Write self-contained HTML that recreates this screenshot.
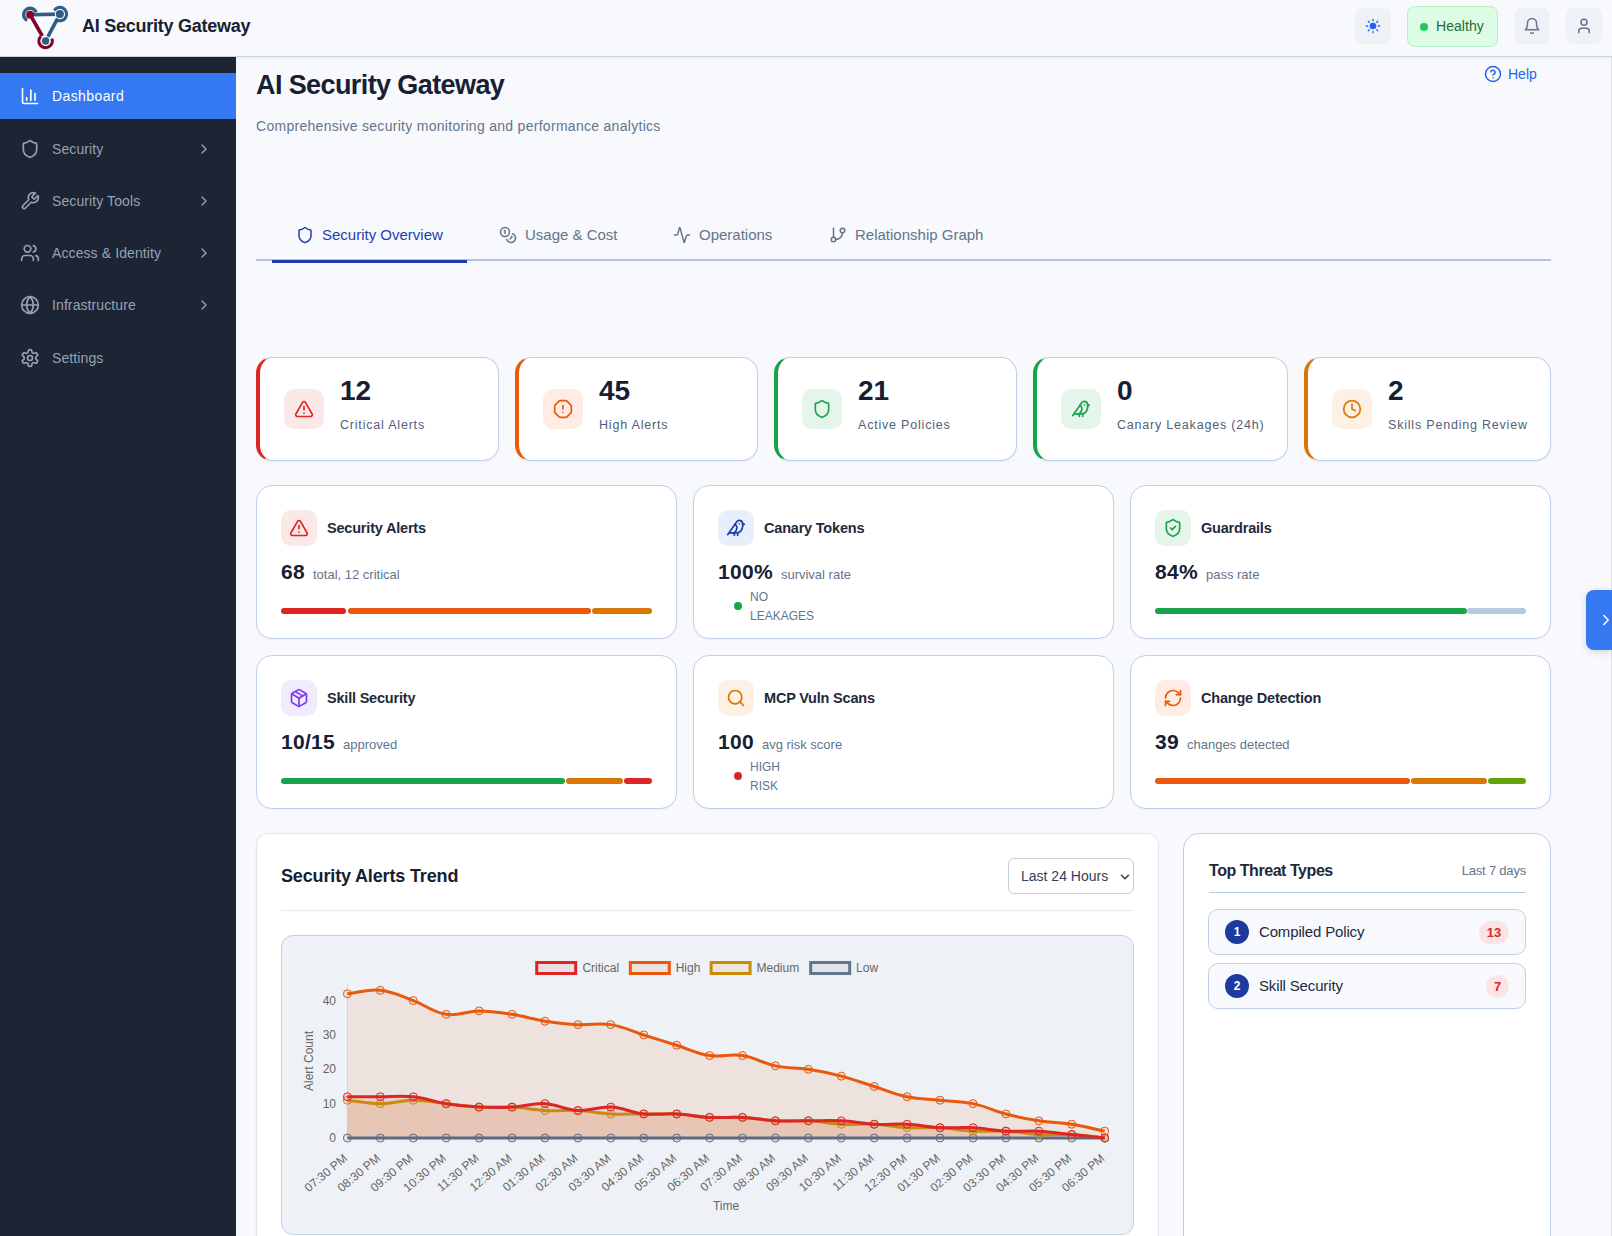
<!DOCTYPE html>
<html><head><meta charset="utf-8">
<style>
*{box-sizing:border-box;margin:0;padding:0}
html,body{width:1612px;height:1236px;overflow:hidden}
body{font-family:"Liberation Sans",sans-serif;background:#f7f9fc;color:#1e293b;position:relative}
.abs{position:absolute}
svg{display:block}
/* header */
#hdr{position:absolute;left:0;top:0;width:1612px;height:57px;background:#f7f9fc;border-bottom:1px solid #c5d3e6;box-shadow:0 1px 3px rgba(15,23,42,.07);z-index:5}
#hdr .title{position:absolute;left:82px;top:15px;font-size:18px;font-weight:bold;color:#172033;letter-spacing:-0.25px;line-height:22px}
.hbtn{position:absolute;top:8px;width:36px;height:36px;border-radius:8px;background:#eef1f6}
.hbtn svg{position:absolute;left:9px;top:9px}
#healthy{position:absolute;left:1407px;top:6px;width:91px;height:41px;border-radius:8px;background:#dcfce4;border:1px solid #b4f0c6}
#healthy .dot{position:absolute;left:12px;top:16px;width:8px;height:8px;border-radius:50%;background:#22c55e}
#healthy .t{position:absolute;left:28px;top:11px;font-size:14px;color:#1f6b3a;line-height:17px;letter-spacing:0.05px}
/* sidebar */
#side{position:absolute;left:0;top:57px;width:236px;height:1179px;background:#1d2433}
.nav{position:absolute;left:0;width:236px;height:46px;color:#94a3b8;font-size:14px;letter-spacing:0.1px}
.nav.active .t{letter-spacing:0.4px}
.nav svg{position:absolute;left:20px;top:13px}
.nav .t{position:absolute;left:52px;top:15px;line-height:17px}
.nav .chev{position:absolute;left:196px;top:15px}
.nav.active{background:#3478f2;color:#fff}
/* main */
#main{position:absolute;left:236px;top:57px;width:1376px;height:1179px}
.h1{position:absolute;left:256px;top:68.5px;font-size:27px;font-weight:bold;color:#172033;letter-spacing:-0.6px;line-height:32px}
.sub{position:absolute;left:256px;top:118px;font-size:14px;color:#64748b;letter-spacing:0.29px;line-height:17px}
#help{position:absolute;left:1484px;top:65px;width:60px;height:20px;color:#2563eb;font-size:14px}
#help .hi{position:absolute;left:0;top:0}
#help .t{position:absolute;left:24px;top:1px;line-height:17px}
#tabs{position:absolute;left:256px;top:259px;width:1295px;height:2px;background:#b3c6e0}
.tab{position:absolute;top:215px;height:48px;font-size:15px;color:#64748b}
.tab svg{position:absolute;left:24px;top:11px}
.tab .t{position:absolute;top:11px;line-height:18px;white-space:nowrap}
.tab.active{color:#1e3fae}
.tab.active:after{content:"";position:absolute;left:0;right:0;bottom:0;height:3px;background:#1e3aa8}
/* stat cards */
.stat{position:absolute;top:357px;height:104px;background:#fff;border:1px solid #c0d0e6;border-left-width:4px;border-radius:16px;box-shadow:0 1px 2px rgba(0,0,0,.05)}
.stat .ib{position:absolute;left:24px;top:31px;width:40px;height:40px;border-radius:10px}
.stat .ib svg{position:absolute;left:10px;top:10px}
.stat .num{position:absolute;left:80px;top:17px;font-size:28px;font-weight:bold;color:#172033;line-height:32px}
.stat .lbl{position:absolute;left:80px;top:60px;font-size:12.5px;color:#526077;letter-spacing:0.8px;line-height:15px;white-space:nowrap}
/* metric cards */
.card{position:absolute;width:421px;height:154px;background:#fff;border:1px solid #c0d0e6;border-radius:16px;box-shadow:0 1px 2px rgba(0,0,0,.04)}
.card .ib{position:absolute;left:24px;top:24px;width:36px;height:36px;border-radius:10px}
.card .ib svg{position:absolute;left:8px;top:8px}
.card .ttl{position:absolute;left:70px;top:33px;font-size:14.5px;font-weight:bold;color:#1e293b;line-height:18px;letter-spacing:-0.2px;white-space:nowrap}
.card .big{position:absolute;left:24px;top:74px;font-size:21px;font-weight:bold;color:#172033;line-height:24px;white-space:nowrap;letter-spacing:0.3px}
.card .small{font-size:13px;font-weight:normal;color:#64748b;margin-left:8px;letter-spacing:0px}
.card .bar{position:absolute;left:24px;top:122px;width:371px;height:6px}
.card .bar i{position:absolute;top:0;display:block;height:6px;border-radius:3px}
.card .stt{position:absolute;left:56px;top:102px;font-size:12px;color:#64748b;line-height:19px;letter-spacing:0px}
.card .sdot{position:absolute;left:40px;top:116px;width:8px;height:8px;border-radius:50%}
.nav .chev svg{position:static}
#ccard{position:absolute;left:256px;top:833px;width:903px;height:500px;background:#fff;border-radius:12px;border:1px solid #e3e6eb;box-shadow:0 1px 3px rgba(15,23,42,.06)}
#sel{position:absolute;left:1008px;top:858px;width:126px;height:36px;background:#fff;border:1px solid #c8cdd5;border-radius:6px;color:#334155;font-size:14px}
#sel .t{position:absolute;left:12px;top:9px;line-height:17px}
#sel .cv{position:absolute;left:109px;top:11px}
#cbox{position:absolute;left:281px;top:935px;width:853px;height:300px;background:#eef2f7;border:1px solid #c0d0e6;border-radius:12px}
#tcard{position:absolute;left:1183px;top:833px;width:368px;height:500px;background:#fff;border:1px solid #c0d0e6;border-radius:16px}
.titem{position:absolute;left:1208px;width:318px;height:46px;background:#f7f9fc;border:1px solid #c0d0e6;border-radius:10px}
.titem .bd{position:absolute;left:16px;top:10px;width:24px;height:24px;border-radius:50%;background:#1e3a9f;color:#fff;font-size:12px;font-weight:bold;text-align:center;line-height:24px}
.titem .t{position:absolute;left:50px;top:13px;font-size:15px;color:#1e293b;line-height:18px;letter-spacing:-0.15px}
.titem .pill{position:absolute;top:11px;height:23px;border-radius:12px;background:#fbe4e6;color:#dc2626;font-size:13px;font-weight:bold;text-align:center;line-height:23px}
#toggle{position:absolute;left:1586px;top:590px;width:26px;height:60px;background:#3478f2;border-radius:8px 0 0 8px;box-shadow:0 2px 8px rgba(0,0,0,.15)}
#toggle svg{position:absolute;left:11px;top:21px}
</style></head>

</head>
<body>
<!-- HEADER -->
<div id="hdr">
  <svg class="abs" style="left:0;top:0" width="80" height="56" viewBox="0 0 80 56">
    <g fill="none" stroke-linecap="butt">
      <path d="M30.1 14.7 L59.9 14.1" stroke="#2f5d84" stroke-width="3.6"/>
      <path d="M59.9 14.1 L45.6 41.0" stroke="#2f5d84" stroke-width="3.6"/>
      <path d="M30.1 14.7 L42.3 36.0" stroke="#870026" stroke-width="3.6"/>
      <path d="M27.10 20.35 A6.40 6.40 0 1 1 36.03 12.30" stroke="#2f5d84" stroke-width="3.3"/>
      <path d="M54.36 10.51 A6.60 6.60 0 1 1 56.80 19.93" stroke="#2f5d84" stroke-width="3.3"/>
      <path d="M51.72 38.53 A6.60 6.60 0 1 1 40.77 36.50" stroke="#870026" stroke-width="3.3"/>
    </g>
    <circle cx="59.9" cy="14.1" r="4.4" fill="none" stroke="#f7f9fc" stroke-width="1.3"/>
    <circle cx="45.6" cy="41.0" r="4.4" fill="none" stroke="#f7f9fc" stroke-width="1.3"/>
    <circle cx="30.1" cy="14.7" r="3.9" fill="#870026"/>
    <circle cx="59.9" cy="14.1" r="4" fill="#2f5d84"/>
    <circle cx="45.6" cy="41.0" r="3.7" fill="#2f5d84"/>
  </svg>
  <div class="title">AI Security Gateway</div>
  <div class="hbtn" style="left:1355px">
    <svg width="16" height="16" style="left:10px;top:10px" viewBox="0 0 24 24" fill="none" stroke="#2563eb" stroke-width="2" stroke-linecap="round"><circle cx="12" cy="12" r="4" fill="#2563eb"/><path d="M12 2v2M12 20v2M4.93 4.93l1.41 1.41M17.66 17.66l1.41 1.41M2 12h2M20 12h2M6.34 17.66l-1.41 1.41M19.07 4.93l-1.41 1.41"/></svg>
  </div>
  <div id="healthy"><span class="dot"></span><span class="t">Healthy</span></div>
  <div class="hbtn" style="left:1514px">
    <svg width="18" height="18" viewBox="0 0 24 24" fill="none" stroke="#64748b" stroke-width="2" stroke-linecap="round" stroke-linejoin="round"><path d="M6 8a6 6 0 0 1 12 0c0 7 3 9 3 9H3s3-2 3-9"/><path d="M10.3 21a1.94 1.94 0 0 0 3.4 0"/></svg>
  </div>
  <div class="hbtn" style="left:1566px">
    <svg width="18" height="18" viewBox="0 0 24 24" fill="none" stroke="#64748b" stroke-width="2" stroke-linecap="round" stroke-linejoin="round"><path d="M19 21v-2a4 4 0 0 0-4-4H9a4 4 0 0 0-4 4v2"/><circle cx="12" cy="7" r="4"/></svg>
  </div>
</div>



<div id="side">
<div class="nav active" style="top:16px"><svg width="20" height="20" viewBox="0 0 24 24" fill="none" stroke="#fff" stroke-width="2" stroke-linecap="round" stroke-linejoin="round"><path d="M3 3v16a2 2 0 0 0 2 2h16"/><path d="M18 17V9"/><path d="M13 17V5"/><path d="M8 17v-3"/></svg><span class="t">Dashboard</span></div>
<div class="nav" style="top:69px"><svg width="20" height="20" viewBox="0 0 24 24" fill="none" stroke="#94a3b8" stroke-width="2" stroke-linecap="round" stroke-linejoin="round"><path d="M20 13c0 5-3.5 7.5-7.66 8.95a1 1 0 0 1-.67-.01C7.5 20.5 4 18 4 13V6a1 1 0 0 1 1-1c2 0 4.5-1.2 6.24-2.72a1.17 1.17 0 0 1 1.52 0C14.51 3.81 17 5 19 5a1 1 0 0 1 1 1z"/></svg><span class="t">Security</span><span class="chev"><svg width="16" height="16" viewBox="0 0 24 24" fill="none" stroke="#94a3b8" stroke-width="2" stroke-linecap="round" stroke-linejoin="round"><path d="m9 18 6-6-6-6"/></svg></span></div>
<div class="nav" style="top:121px"><svg width="20" height="20" viewBox="0 0 24 24" fill="none" stroke="#94a3b8" stroke-width="2" stroke-linecap="round" stroke-linejoin="round"><path d="M14.7 6.3a1 1 0 0 0 0 1.4l1.6 1.6a1 1 0 0 0 1.4 0l3.77-3.77a6 6 0 0 1-7.94 7.94l-6.91 6.910a2.12 2.12 0 0 1-3-3l6.91-6.91a6 6 0 0 1 7.94-7.94l-3.76 3.76z"/></svg><span class="t">Security Tools</span><span class="chev"><svg width="16" height="16" viewBox="0 0 24 24" fill="none" stroke="#94a3b8" stroke-width="2" stroke-linecap="round" stroke-linejoin="round"><path d="m9 18 6-6-6-6"/></svg></span></div>
<div class="nav" style="top:173px"><svg width="20" height="20" viewBox="0 0 24 24" fill="none" stroke="#94a3b8" stroke-width="2" stroke-linecap="round" stroke-linejoin="round"><path d="M16 21v-2a4 4 0 0 0-4-4H6a4 4 0 0 0-4 4v2"/><circle cx="9" cy="7" r="4"/><path d="M22 21v-2a4 4 0 0 0-3-3.87"/><path d="M16 3.13a4 4 0 0 1 0 7.75"/></svg><span class="t">Access &amp; Identity</span><span class="chev"><svg width="16" height="16" viewBox="0 0 24 24" fill="none" stroke="#94a3b8" stroke-width="2" stroke-linecap="round" stroke-linejoin="round"><path d="m9 18 6-6-6-6"/></svg></span></div>
<div class="nav" style="top:225px"><svg width="20" height="20" viewBox="0 0 24 24" fill="none" stroke="#94a3b8" stroke-width="2" stroke-linecap="round" stroke-linejoin="round"><circle cx="12" cy="12" r="10"/><path d="M12 2a14.5 14.5 0 0 0 0 20 14.5 14.5 0 0 0 0-20"/><path d="M2 12h20"/></svg><span class="t">Infrastructure</span><span class="chev"><svg width="16" height="16" viewBox="0 0 24 24" fill="none" stroke="#94a3b8" stroke-width="2" stroke-linecap="round" stroke-linejoin="round"><path d="m9 18 6-6-6-6"/></svg></span></div>
<div class="nav" style="top:278px"><svg width="20" height="20" viewBox="0 0 24 24" fill="none" stroke="#94a3b8" stroke-width="2" stroke-linecap="round" stroke-linejoin="round"><path d="M12.22 2h-.44a2 2 0 0 0-2 2v.18a2 2 0 0 1-1 1.73l-.43.25a2 2 0 0 1-2 0l-.15-.08a2 2 0 0 0-2.73.73l-.22.38a2 2 0 0 0 .73 2.73l.15.1a2 2 0 0 1 1 1.72v.51a2 2 0 0 1-1 1.74l-.15.09a2 2 0 0 0-.73 2.73l.22.38a2 2 0 0 0 2.73.73l.15-.08a2 2 0 0 1 2 0l.43.25a2 2 0 0 1 1 1.73V20a2 2 0 0 0 2 2h.44a2 2 0 0 0 2-2v-.18a2 2 0 0 1 1-1.73l.43-.25a2 2 0 0 1 2 0l.15.08a2 2 0 0 0 2.73-.73l.22-.39a2 2 0 0 0-.73-2.73l-.15-.08a2 2 0 0 1-1-1.74v-.5a2 2 0 0 1 1-1.74l.15-.09a2 2 0 0 0 .73-2.73l-.22-.38a2 2 0 0 0-2.73-.73l-.15.08a2 2 0 0 1-2 0l-.43-.25a2 2 0 0 1-1-1.73V4a2 2 0 0 0-2-2z"/><circle cx="12" cy="12" r="3"/></svg><span class="t">Settings</span></div>
</div>
<div class="h1">AI Security Gateway</div>
<div class="sub">Comprehensive security monitoring and performance analytics</div>
<div id="help"><span class="hi"><svg width="18" height="18" viewBox="0 0 24 24" fill="none" stroke="#2563eb" stroke-width="2" stroke-linecap="round" stroke-linejoin="round"><circle cx="12" cy="12" r="10"/><path d="M9.09 9a3 3 0 0 1 5.83 1c0 2-3 3-3 3"/><path d="M12 17h.01"/></svg></span><span class="t">Help</span></div>
<div id="tabs"></div>
<div class="tab active" style="left:272px;width:195px"><svg width="18" height="18" viewBox="0 0 24 24" fill="none" stroke="#1e3fae" stroke-width="2" stroke-linecap="round" stroke-linejoin="round"><path d="M20 13c0 5-3.5 7.5-7.66 8.95a1 1 0 0 1-.67-.01C7.5 20.5 4 18 4 13V6a1 1 0 0 1 1-1c2 0 4.5-1.2 6.24-2.72a1.17 1.17 0 0 1 1.52 0C14.51 3.81 17 5 19 5a1 1 0 0 1 1 1z"/></svg><span class="t" style="left:50px">Security Overview</span></div>
<div class="tab" style="left:475px;width:167px"><svg width="18" height="18" viewBox="0 0 24 24" fill="none" stroke="#64748b" stroke-width="2" stroke-linecap="round" stroke-linejoin="round"><circle cx="8" cy="8" r="6"/><path d="M18.09 10.37A6 6 0 1 1 10.34 18"/><path d="M7 6h1v4"/><path d="m16.71 13.88.7.71-2.82 2.82"/></svg><span class="t" style="left:50px">Usage &amp; Cost</span></div>
<div class="tab" style="left:649px;width:147px"><svg width="18" height="18" viewBox="0 0 24 24" fill="none" stroke="#64748b" stroke-width="2" stroke-linecap="round" stroke-linejoin="round"><path d="M22 12h-2.48a2 2 0 0 0-1.93 1.46l-2.35 8.36a.25.25 0 0 1-.48 0L9.24 2.18a.25.25 0 0 0-.48 0l-2.35 8.36A2 2 0 0 1 4.49 12H2"/></svg><span class="t" style="left:50px">Operations</span></div>
<div class="tab" style="left:805px;width:178px"><svg width="18" height="18" viewBox="0 0 24 24" fill="none" stroke="#64748b" stroke-width="2" stroke-linecap="round" stroke-linejoin="round"><line x1="6" x2="6" y1="3" y2="15"/><circle cx="18" cy="6" r="3"/><circle cx="6" cy="18" r="3"/><path d="M18 9a9 9 0 0 1-9 9"/></svg><span class="t" style="left:50px">Relationship Graph</span></div>
<div class="stat" style="left:256px;width:243px;border-left-color:#dc2626"><div class="ib" style="background:#fde8e8"><svg width="20" height="20" viewBox="0 0 24 24" fill="none" stroke="#dc2626" stroke-width="2" stroke-linecap="round" stroke-linejoin="round"><path d="m21.73 18-8-14a2 2 0 0 0-3.48 0l-8 14A2 2 0 0 0 4 21h16a2 2 0 0 0 1.73-3"/><path d="M12 9v4"/><path d="M12 17h.01"/></svg></div><div class="num">12</div><div class="lbl">Critical Alerts</div></div>
<div class="stat" style="left:515px;width:243px;border-left-color:#ea580c"><div class="ib" style="background:#ffede5"><svg width="20" height="20" viewBox="0 0 24 24" fill="none" stroke="#ea580c" stroke-width="2" stroke-linecap="round" stroke-linejoin="round"><path d="M12 16h.01"/><path d="M12 8v4"/><path d="M15.312 2a2 2 0 0 1 1.414.586l4.688 4.688A2 2 0 0 1 22 8.688v6.624a2 2 0 0 1-.586 1.414l-4.688 4.688a2 2 0 0 1-1.414.586H8.688a2 2 0 0 1-1.414-.586l-4.688-4.688A2 2 0 0 1 2 15.312V8.688a2 2 0 0 1 .586-1.414l4.688-4.688A2 2 0 0 1 8.688 2z"/></svg></div><div class="num">45</div><div class="lbl">High Alerts</div></div>
<div class="stat" style="left:774px;width:243px;border-left-color:#16a34a"><div class="ib" style="background:#e6f5ea"><svg width="20" height="20" viewBox="0 0 24 24" fill="none" stroke="#16a34a" stroke-width="2" stroke-linecap="round" stroke-linejoin="round"><path d="M20 13c0 5-3.5 7.5-7.66 8.95a1 1 0 0 1-.67-.01C7.5 20.5 4 18 4 13V6a1 1 0 0 1 1-1c2 0 4.5-1.2 6.24-2.72a1.17 1.17 0 0 1 1.52 0C14.51 3.81 17 5 19 5a1 1 0 0 1 1 1z"/></svg></div><div class="num">21</div><div class="lbl">Active Policies</div></div>
<div class="stat" style="left:1033px;width:255px;border-left-color:#16a34a"><div class="ib" style="background:#e6f5ea"><svg width="20" height="20" viewBox="0 0 24 24" fill="none" stroke="#16a34a" stroke-width="2" stroke-linecap="round" stroke-linejoin="round"><path d="M16 7h.01"/><path d="M3.4 18H12a8 8 0 0 0 8-8V7a4 4 0 0 0-7.28-2.3L2 20"/><path d="m20 7 2 .5-2 .5"/><path d="M10 18v3"/><path d="M14 17.75V21"/><path d="M7 18a6 6 0 0 0 3.84-10.61"/></svg></div><div class="num">0</div><div class="lbl">Canary Leakages (24h)</div></div>
<div class="stat" style="left:1304px;width:247px;border-left-color:#d97706"><div class="ib" style="background:#fdf0e4"><svg width="20" height="20" viewBox="0 0 24 24" fill="none" stroke="#d97706" stroke-width="2" stroke-linecap="round" stroke-linejoin="round"><circle cx="12" cy="12" r="10"/><path d="M12 6v6l4 2"/></svg></div><div class="num">2</div><div class="lbl">Skills Pending Review</div></div>
<div class="card" style="left:256px;top:485px"><div class="ib" style="background:#fde8e8"><svg width="20" height="20" viewBox="0 0 24 24" fill="none" stroke="#dc2626" stroke-width="2" stroke-linecap="round" stroke-linejoin="round"><path d="m21.73 18-8-14a2 2 0 0 0-3.48 0l-8 14A2 2 0 0 0 4 21h16a2 2 0 0 0 1.73-3"/><path d="M12 9v4"/><path d="M12 17h.01"/></svg></div><div class="ttl">Security Alerts</div><div class="big">68<span class="small">total, 12 critical</span></div><div class="bar"><i style="left:0px;width:65px;background:#dc2626"></i><i style="left:67px;width:243px;background:#ea580c"></i><i style="left:311px;width:60px;background:#d97706"></i></div></div>
<div class="card" style="left:693px;top:485px"><div class="ib" style="background:#e8effc"><svg width="20" height="20" viewBox="0 0 24 24" fill="none" stroke="#1e3aa8" stroke-width="2" stroke-linecap="round" stroke-linejoin="round"><path d="M16 7h.01"/><path d="M3.4 18H12a8 8 0 0 0 8-8V7a4 4 0 0 0-7.28-2.3L2 20"/><path d="m20 7 2 .5-2 .5"/><path d="M10 18v3"/><path d="M14 17.75V21"/><path d="M7 18a6 6 0 0 0 3.84-10.61"/></svg></div><div class="ttl">Canary Tokens</div><div class="big">100%<span class="small">survival rate</span></div><span class="sdot" style="background:#16a34a"></span><div class="stt">NO<br>LEAKAGES</div></div>
<div class="card" style="left:1130px;top:485px"><div class="ib" style="background:#e6f5ea"><svg width="20" height="20" viewBox="0 0 24 24" fill="none" stroke="#16a34a" stroke-width="2" stroke-linecap="round" stroke-linejoin="round"><path d="M20 13c0 5-3.5 7.5-7.66 8.95a1 1 0 0 1-.67-.01C7.5 20.5 4 18 4 13V6a1 1 0 0 1 1-1c2 0 4.5-1.2 6.24-2.72a1.17 1.17 0 0 1 1.52 0C14.51 3.81 17 5 19 5a1 1 0 0 1 1 1z"/><path d="m9 12 2 2 4-4"/></svg></div><div class="ttl">Guardrails</div><div class="big">84%<span class="small">pass rate</span></div><div class="bar"><i style="left:0px;width:312px;background:#16a34a"></i><i style="left:312px;width:59px;background:#b8c8e0"></i></div></div>
<div class="card" style="left:256px;top:655px"><div class="ib" style="background:#f1ebfe"><svg width="20" height="20" viewBox="0 0 24 24" fill="none" stroke="#7c3aed" stroke-width="2" stroke-linecap="round" stroke-linejoin="round"><path d="M11 21.73a2 2 0 0 0 2 0l7-4A2 2 0 0 0 21 16V8a2 2 0 0 0-1-1.73l-7-4a2 2 0 0 0-2 0l-7 4A2 2 0 0 0 3 8v8a2 2 0 0 0 1 1.73z"/><path d="M12 22V12"/><path d="m3.3 7 7.703 4.734a2 2 0 0 0 1.994 0L20.7 7"/><path d="m7.5 4.27 9 5.15"/></svg></div><div class="ttl">Skill Security</div><div class="big">10/15<span class="small">approved</span></div><div class="bar"><i style="left:0px;width:284px;background:#16a34a"></i><i style="left:285px;width:57px;background:#d97706"></i><i style="left:343px;width:28px;background:#dc2626"></i></div></div>
<div class="card" style="left:693px;top:655px"><div class="ib" style="background:#fdf0e4"><svg width="20" height="20" viewBox="0 0 24 24" fill="none" stroke="#d97706" stroke-width="2" stroke-linecap="round" stroke-linejoin="round"><circle cx="11" cy="11" r="8"/><path d="m21 21-4.3-4.3"/></svg></div><div class="ttl">MCP Vuln Scans</div><div class="big">100<span class="small">avg risk score</span></div><span class="sdot" style="background:#dc2626"></span><div class="stt">HIGH<br>RISK</div></div>
<div class="card" style="left:1130px;top:655px"><div class="ib" style="background:#ffede5"><svg width="20" height="20" viewBox="0 0 24 24" fill="none" stroke="#ea580c" stroke-width="2" stroke-linecap="round" stroke-linejoin="round"><path d="M3 12a9 9 0 0 1 9-9 9.75 9.75 0 0 1 6.74 2.74L21 8"/><path d="M21 3v5h-5"/><path d="M21 12a9 9 0 0 1-9 9 9.75 9.75 0 0 1-6.74-2.74L3 16"/><path d="M8 16H3v5"/></svg></div><div class="ttl">Change Detection</div><div class="big">39<span class="small">changes detected</span></div><div class="bar"><i style="left:0px;width:255px;background:#ea580c"></i><i style="left:256px;width:76px;background:#d97706"></i><i style="left:333px;width:38px;background:#65a30d"></i></div></div>
<div id="ccard"></div>
<div class="abs" style="left:281px;top:865px;font-size:18px;font-weight:bold;color:#172033;line-height:22px;letter-spacing:-0.15px">Security Alerts Trend</div>
<div id="sel"><span class="t">Last 24 Hours</span><span class="cv"><svg width="14" height="14" viewBox="0 0 24 24" fill="none" stroke="#334155" stroke-width="2.6" stroke-linecap="round" stroke-linejoin="round"><path d="m6 9 6 6 6-6"/></svg></span></div>
<div class="abs" style="left:281px;top:910px;width:853px;height:1px;background:#e6ebf2"></div>
<div id="cbox"></div>
<svg class="abs" style="left:281px;top:935px" width="853" height="300" viewBox="281 935 853 300" font-family="Liberation Sans, sans-serif">
<line x1="347.40" y1="983.5" x2="347.40" y2="1138.0" stroke="rgba(0,0,0,0.1)" stroke-width="1"/>
<path d="M347.40 1138.00 C360.57 1138.00 367.16 1138.00 380.33 1138.00 C393.50 1138.00 400.08 1138.00 413.25 1138.00 C426.42 1138.00 433.01 1138.00 446.18 1138.00 C459.35 1138.00 465.93 1138.00 479.10 1138.00 C492.27 1138.00 498.86 1138.00 512.03 1138.00 C525.20 1138.00 531.79 1138.00 544.96 1138.00 C558.13 1138.00 564.71 1138.00 577.88 1138.00 C591.05 1138.00 597.64 1138.00 610.81 1138.00 C623.98 1138.00 630.56 1138.00 643.73 1138.00 C656.91 1138.00 663.49 1138.00 676.66 1138.00 C689.83 1138.00 696.42 1138.00 709.59 1138.00 C722.76 1138.00 729.34 1138.00 742.51 1138.00 C755.68 1138.00 762.27 1138.00 775.44 1138.00 C788.61 1138.00 795.19 1138.00 808.37 1138.00 C821.54 1138.00 828.12 1138.00 841.29 1138.00 C854.46 1138.00 861.05 1138.00 874.22 1138.00 C887.39 1138.00 893.97 1138.00 907.14 1138.00 C920.31 1138.00 926.90 1138.00 940.07 1138.00 C953.24 1138.00 959.83 1138.00 973.00 1138.00 C986.17 1138.00 992.75 1138.00 1005.92 1138.00 C1019.09 1138.00 1025.68 1138.00 1038.85 1138.00 C1052.02 1138.00 1058.60 1138.00 1071.77 1138.00 C1084.94 1138.00 1091.53 1138.00 1104.70 1138.00 L1104.70 1138.00 L347.40 1138.00 Z" fill="rgba(100,116,139,0.1)"/>
<path d="M347.40 1100.21 C360.57 1101.59 367.16 1103.65 380.33 1103.65 C393.50 1103.65 400.08 1100.21 413.25 1100.21 C426.42 1100.21 433.01 1102.28 446.18 1103.65 C459.35 1105.02 465.90 1106.40 479.10 1107.09 C492.24 1107.77 498.90 1106.40 512.03 1107.09 C525.24 1107.77 531.75 1109.83 544.96 1110.52 C558.09 1111.21 564.75 1109.83 577.88 1110.52 C591.09 1111.21 597.60 1113.27 610.81 1113.95 C623.94 1114.64 630.56 1113.95 643.73 1113.95 C656.91 1113.95 663.53 1113.27 676.66 1113.95 C689.87 1114.64 696.38 1116.70 709.59 1117.39 C722.72 1118.08 729.38 1116.70 742.51 1117.39 C755.72 1118.08 762.23 1120.14 775.44 1120.83 C788.57 1121.51 795.23 1120.14 808.37 1120.83 C821.57 1121.51 828.09 1123.57 841.29 1124.26 C854.43 1124.95 861.08 1123.57 874.22 1124.26 C887.42 1124.95 893.94 1127.01 907.14 1127.69 C920.28 1128.38 926.93 1127.01 940.07 1127.69 C953.28 1128.38 959.79 1130.44 973.00 1131.13 C986.13 1131.82 992.79 1130.44 1005.92 1131.13 C1019.13 1131.82 1025.64 1133.88 1038.85 1134.57 C1051.98 1135.25 1058.64 1133.88 1071.77 1134.57 C1084.98 1135.25 1091.53 1136.63 1104.70 1138.00 L1104.70 1138.00 L347.40 1138.00 Z" fill="rgba(202,138,4,0.1)"/>
<path d="M347.40 993.73 C360.57 992.36 367.43 988.95 380.33 990.30 C393.77 991.70 400.30 995.87 413.25 1000.60 C426.64 1005.49 432.52 1012.20 446.18 1014.34 C458.86 1016.32 465.93 1010.90 479.10 1010.90 C492.27 1010.90 498.96 1012.30 512.03 1014.34 C525.31 1016.42 531.68 1019.13 544.96 1021.21 C558.02 1023.25 564.68 1023.96 577.88 1024.64 C591.02 1025.33 597.95 1022.63 610.81 1024.64 C624.29 1026.75 630.56 1030.83 643.73 1034.95 C656.91 1039.07 663.49 1041.13 676.66 1045.26 C689.83 1049.38 696.11 1053.45 709.59 1055.56 C722.45 1057.57 729.65 1053.55 742.51 1055.56 C755.99 1057.67 762.00 1063.06 775.44 1065.87 C788.34 1068.56 795.30 1067.26 808.37 1069.30 C821.64 1071.38 828.29 1072.78 841.29 1076.17 C854.63 1079.65 861.05 1082.35 874.22 1086.47 C887.39 1090.60 893.70 1093.98 907.14 1096.78 C920.04 1099.47 926.90 1098.84 940.07 1100.21 C953.24 1101.59 960.10 1100.96 973.00 1103.65 C986.44 1106.45 992.58 1110.48 1005.92 1113.95 C1018.92 1117.35 1025.57 1118.75 1038.85 1120.83 C1051.91 1122.87 1058.71 1122.22 1071.77 1124.26 C1085.05 1126.34 1091.53 1128.38 1104.70 1131.13 L1104.70 1138.00 L347.40 1138.00 Z" fill="rgba(234,88,12,0.1)"/>
<path d="M347.40 1096.78 C360.57 1096.78 367.16 1096.78 380.33 1096.78 C393.50 1096.78 400.22 1095.42 413.25 1096.78 C426.56 1098.17 432.90 1101.57 446.18 1103.65 C459.24 1105.69 465.90 1106.40 479.10 1107.09 C492.24 1107.77 498.90 1107.77 512.03 1107.09 C525.24 1106.40 531.89 1102.97 544.96 1103.65 C558.23 1104.34 564.61 1109.83 577.88 1110.52 C590.95 1111.20 597.74 1106.40 610.81 1107.09 C624.08 1107.78 630.42 1112.57 643.73 1113.95 C656.76 1115.31 663.53 1113.27 676.66 1113.95 C689.87 1114.64 696.38 1116.70 709.59 1117.39 C722.72 1118.08 729.38 1116.70 742.51 1117.39 C755.72 1118.08 762.23 1120.14 775.44 1120.83 C788.57 1121.51 795.19 1120.83 808.37 1120.83 C821.54 1120.83 828.16 1120.14 841.29 1120.83 C854.50 1121.51 861.01 1123.57 874.22 1124.26 C887.35 1124.95 894.01 1123.57 907.14 1124.26 C920.35 1124.95 926.86 1127.01 940.07 1127.69 C953.20 1128.38 959.86 1127.01 973.00 1127.69 C986.20 1128.38 992.72 1130.44 1005.92 1131.13 C1019.06 1131.82 1025.71 1130.44 1038.85 1131.13 C1052.05 1131.82 1058.60 1133.19 1071.77 1134.57 C1084.94 1135.94 1091.53 1136.63 1104.70 1138.00 L1104.70 1138.00 L347.40 1138.00 Z" fill="rgba(220,38,38,0.1)"/>
<path d="M347.40 1138.00 C360.57 1138.00 367.16 1138.00 380.33 1138.00 C393.50 1138.00 400.08 1138.00 413.25 1138.00 C426.42 1138.00 433.01 1138.00 446.18 1138.00 C459.35 1138.00 465.93 1138.00 479.10 1138.00 C492.27 1138.00 498.86 1138.00 512.03 1138.00 C525.20 1138.00 531.79 1138.00 544.96 1138.00 C558.13 1138.00 564.71 1138.00 577.88 1138.00 C591.05 1138.00 597.64 1138.00 610.81 1138.00 C623.98 1138.00 630.56 1138.00 643.73 1138.00 C656.91 1138.00 663.49 1138.00 676.66 1138.00 C689.83 1138.00 696.42 1138.00 709.59 1138.00 C722.76 1138.00 729.34 1138.00 742.51 1138.00 C755.68 1138.00 762.27 1138.00 775.44 1138.00 C788.61 1138.00 795.19 1138.00 808.37 1138.00 C821.54 1138.00 828.12 1138.00 841.29 1138.00 C854.46 1138.00 861.05 1138.00 874.22 1138.00 C887.39 1138.00 893.97 1138.00 907.14 1138.00 C920.31 1138.00 926.90 1138.00 940.07 1138.00 C953.24 1138.00 959.83 1138.00 973.00 1138.00 C986.17 1138.00 992.75 1138.00 1005.92 1138.00 C1019.09 1138.00 1025.68 1138.00 1038.85 1138.00 C1052.02 1138.00 1058.60 1138.00 1071.77 1138.00 C1084.94 1138.00 1091.53 1138.00 1104.70 1138.00" fill="none" stroke="#5b6b82" stroke-width="3"/>
<circle cx="347.40" cy="1138.00" r="4" fill="rgba(100,116,139,0.1)" stroke="#5b6b82" stroke-width="1"/>
<circle cx="380.33" cy="1138.00" r="4" fill="rgba(100,116,139,0.1)" stroke="#5b6b82" stroke-width="1"/>
<circle cx="413.25" cy="1138.00" r="4" fill="rgba(100,116,139,0.1)" stroke="#5b6b82" stroke-width="1"/>
<circle cx="446.18" cy="1138.00" r="4" fill="rgba(100,116,139,0.1)" stroke="#5b6b82" stroke-width="1"/>
<circle cx="479.10" cy="1138.00" r="4" fill="rgba(100,116,139,0.1)" stroke="#5b6b82" stroke-width="1"/>
<circle cx="512.03" cy="1138.00" r="4" fill="rgba(100,116,139,0.1)" stroke="#5b6b82" stroke-width="1"/>
<circle cx="544.96" cy="1138.00" r="4" fill="rgba(100,116,139,0.1)" stroke="#5b6b82" stroke-width="1"/>
<circle cx="577.88" cy="1138.00" r="4" fill="rgba(100,116,139,0.1)" stroke="#5b6b82" stroke-width="1"/>
<circle cx="610.81" cy="1138.00" r="4" fill="rgba(100,116,139,0.1)" stroke="#5b6b82" stroke-width="1"/>
<circle cx="643.73" cy="1138.00" r="4" fill="rgba(100,116,139,0.1)" stroke="#5b6b82" stroke-width="1"/>
<circle cx="676.66" cy="1138.00" r="4" fill="rgba(100,116,139,0.1)" stroke="#5b6b82" stroke-width="1"/>
<circle cx="709.59" cy="1138.00" r="4" fill="rgba(100,116,139,0.1)" stroke="#5b6b82" stroke-width="1"/>
<circle cx="742.51" cy="1138.00" r="4" fill="rgba(100,116,139,0.1)" stroke="#5b6b82" stroke-width="1"/>
<circle cx="775.44" cy="1138.00" r="4" fill="rgba(100,116,139,0.1)" stroke="#5b6b82" stroke-width="1"/>
<circle cx="808.37" cy="1138.00" r="4" fill="rgba(100,116,139,0.1)" stroke="#5b6b82" stroke-width="1"/>
<circle cx="841.29" cy="1138.00" r="4" fill="rgba(100,116,139,0.1)" stroke="#5b6b82" stroke-width="1"/>
<circle cx="874.22" cy="1138.00" r="4" fill="rgba(100,116,139,0.1)" stroke="#5b6b82" stroke-width="1"/>
<circle cx="907.14" cy="1138.00" r="4" fill="rgba(100,116,139,0.1)" stroke="#5b6b82" stroke-width="1"/>
<circle cx="940.07" cy="1138.00" r="4" fill="rgba(100,116,139,0.1)" stroke="#5b6b82" stroke-width="1"/>
<circle cx="973.00" cy="1138.00" r="4" fill="rgba(100,116,139,0.1)" stroke="#5b6b82" stroke-width="1"/>
<circle cx="1005.92" cy="1138.00" r="4" fill="rgba(100,116,139,0.1)" stroke="#5b6b82" stroke-width="1"/>
<circle cx="1038.85" cy="1138.00" r="4" fill="rgba(100,116,139,0.1)" stroke="#5b6b82" stroke-width="1"/>
<circle cx="1071.77" cy="1138.00" r="4" fill="rgba(100,116,139,0.1)" stroke="#5b6b82" stroke-width="1"/>
<circle cx="1104.70" cy="1138.00" r="4" fill="rgba(100,116,139,0.1)" stroke="#5b6b82" stroke-width="1"/>
<path d="M347.40 1100.21 C360.57 1101.59 367.16 1103.65 380.33 1103.65 C393.50 1103.65 400.08 1100.21 413.25 1100.21 C426.42 1100.21 433.01 1102.28 446.18 1103.65 C459.35 1105.02 465.90 1106.40 479.10 1107.09 C492.24 1107.77 498.90 1106.40 512.03 1107.09 C525.24 1107.77 531.75 1109.83 544.96 1110.52 C558.09 1111.21 564.75 1109.83 577.88 1110.52 C591.09 1111.21 597.60 1113.27 610.81 1113.95 C623.94 1114.64 630.56 1113.95 643.73 1113.95 C656.91 1113.95 663.53 1113.27 676.66 1113.95 C689.87 1114.64 696.38 1116.70 709.59 1117.39 C722.72 1118.08 729.38 1116.70 742.51 1117.39 C755.72 1118.08 762.23 1120.14 775.44 1120.83 C788.57 1121.51 795.23 1120.14 808.37 1120.83 C821.57 1121.51 828.09 1123.57 841.29 1124.26 C854.43 1124.95 861.08 1123.57 874.22 1124.26 C887.42 1124.95 893.94 1127.01 907.14 1127.69 C920.28 1128.38 926.93 1127.01 940.07 1127.69 C953.28 1128.38 959.79 1130.44 973.00 1131.13 C986.13 1131.82 992.79 1130.44 1005.92 1131.13 C1019.13 1131.82 1025.64 1133.88 1038.85 1134.57 C1051.98 1135.25 1058.64 1133.88 1071.77 1134.57 C1084.98 1135.25 1091.53 1136.63 1104.70 1138.00" fill="none" stroke="#c98a14" stroke-width="3"/>
<circle cx="347.40" cy="1100.21" r="4" fill="rgba(202,138,4,0.1)" stroke="#c98a14" stroke-width="1"/>
<circle cx="380.33" cy="1103.65" r="4" fill="rgba(202,138,4,0.1)" stroke="#c98a14" stroke-width="1"/>
<circle cx="413.25" cy="1100.21" r="4" fill="rgba(202,138,4,0.1)" stroke="#c98a14" stroke-width="1"/>
<circle cx="446.18" cy="1103.65" r="4" fill="rgba(202,138,4,0.1)" stroke="#c98a14" stroke-width="1"/>
<circle cx="479.10" cy="1107.09" r="4" fill="rgba(202,138,4,0.1)" stroke="#c98a14" stroke-width="1"/>
<circle cx="512.03" cy="1107.09" r="4" fill="rgba(202,138,4,0.1)" stroke="#c98a14" stroke-width="1"/>
<circle cx="544.96" cy="1110.52" r="4" fill="rgba(202,138,4,0.1)" stroke="#c98a14" stroke-width="1"/>
<circle cx="577.88" cy="1110.52" r="4" fill="rgba(202,138,4,0.1)" stroke="#c98a14" stroke-width="1"/>
<circle cx="610.81" cy="1113.95" r="4" fill="rgba(202,138,4,0.1)" stroke="#c98a14" stroke-width="1"/>
<circle cx="643.73" cy="1113.95" r="4" fill="rgba(202,138,4,0.1)" stroke="#c98a14" stroke-width="1"/>
<circle cx="676.66" cy="1113.95" r="4" fill="rgba(202,138,4,0.1)" stroke="#c98a14" stroke-width="1"/>
<circle cx="709.59" cy="1117.39" r="4" fill="rgba(202,138,4,0.1)" stroke="#c98a14" stroke-width="1"/>
<circle cx="742.51" cy="1117.39" r="4" fill="rgba(202,138,4,0.1)" stroke="#c98a14" stroke-width="1"/>
<circle cx="775.44" cy="1120.83" r="4" fill="rgba(202,138,4,0.1)" stroke="#c98a14" stroke-width="1"/>
<circle cx="808.37" cy="1120.83" r="4" fill="rgba(202,138,4,0.1)" stroke="#c98a14" stroke-width="1"/>
<circle cx="841.29" cy="1124.26" r="4" fill="rgba(202,138,4,0.1)" stroke="#c98a14" stroke-width="1"/>
<circle cx="874.22" cy="1124.26" r="4" fill="rgba(202,138,4,0.1)" stroke="#c98a14" stroke-width="1"/>
<circle cx="907.14" cy="1127.69" r="4" fill="rgba(202,138,4,0.1)" stroke="#c98a14" stroke-width="1"/>
<circle cx="940.07" cy="1127.69" r="4" fill="rgba(202,138,4,0.1)" stroke="#c98a14" stroke-width="1"/>
<circle cx="973.00" cy="1131.13" r="4" fill="rgba(202,138,4,0.1)" stroke="#c98a14" stroke-width="1"/>
<circle cx="1005.92" cy="1131.13" r="4" fill="rgba(202,138,4,0.1)" stroke="#c98a14" stroke-width="1"/>
<circle cx="1038.85" cy="1134.57" r="4" fill="rgba(202,138,4,0.1)" stroke="#c98a14" stroke-width="1"/>
<circle cx="1071.77" cy="1134.57" r="4" fill="rgba(202,138,4,0.1)" stroke="#c98a14" stroke-width="1"/>
<circle cx="1104.70" cy="1138.00" r="4" fill="rgba(202,138,4,0.1)" stroke="#c98a14" stroke-width="1"/>
<path d="M347.40 993.73 C360.57 992.36 367.43 988.95 380.33 990.30 C393.77 991.70 400.30 995.87 413.25 1000.60 C426.64 1005.49 432.52 1012.20 446.18 1014.34 C458.86 1016.32 465.93 1010.90 479.10 1010.90 C492.27 1010.90 498.96 1012.30 512.03 1014.34 C525.31 1016.42 531.68 1019.13 544.96 1021.21 C558.02 1023.25 564.68 1023.96 577.88 1024.64 C591.02 1025.33 597.95 1022.63 610.81 1024.64 C624.29 1026.75 630.56 1030.83 643.73 1034.95 C656.91 1039.07 663.49 1041.13 676.66 1045.26 C689.83 1049.38 696.11 1053.45 709.59 1055.56 C722.45 1057.57 729.65 1053.55 742.51 1055.56 C755.99 1057.67 762.00 1063.06 775.44 1065.87 C788.34 1068.56 795.30 1067.26 808.37 1069.30 C821.64 1071.38 828.29 1072.78 841.29 1076.17 C854.63 1079.65 861.05 1082.35 874.22 1086.47 C887.39 1090.60 893.70 1093.98 907.14 1096.78 C920.04 1099.47 926.90 1098.84 940.07 1100.21 C953.24 1101.59 960.10 1100.96 973.00 1103.65 C986.44 1106.45 992.58 1110.48 1005.92 1113.95 C1018.92 1117.35 1025.57 1118.75 1038.85 1120.83 C1051.91 1122.87 1058.71 1122.22 1071.77 1124.26 C1085.05 1126.34 1091.53 1128.38 1104.70 1131.13" fill="none" stroke="#ea580c" stroke-width="3"/>
<circle cx="347.40" cy="993.73" r="4" fill="rgba(234,88,12,0.1)" stroke="#ea580c" stroke-width="1"/>
<circle cx="380.33" cy="990.30" r="4" fill="rgba(234,88,12,0.1)" stroke="#ea580c" stroke-width="1"/>
<circle cx="413.25" cy="1000.60" r="4" fill="rgba(234,88,12,0.1)" stroke="#ea580c" stroke-width="1"/>
<circle cx="446.18" cy="1014.34" r="4" fill="rgba(234,88,12,0.1)" stroke="#ea580c" stroke-width="1"/>
<circle cx="479.10" cy="1010.90" r="4" fill="rgba(234,88,12,0.1)" stroke="#ea580c" stroke-width="1"/>
<circle cx="512.03" cy="1014.34" r="4" fill="rgba(234,88,12,0.1)" stroke="#ea580c" stroke-width="1"/>
<circle cx="544.96" cy="1021.21" r="4" fill="rgba(234,88,12,0.1)" stroke="#ea580c" stroke-width="1"/>
<circle cx="577.88" cy="1024.64" r="4" fill="rgba(234,88,12,0.1)" stroke="#ea580c" stroke-width="1"/>
<circle cx="610.81" cy="1024.64" r="4" fill="rgba(234,88,12,0.1)" stroke="#ea580c" stroke-width="1"/>
<circle cx="643.73" cy="1034.95" r="4" fill="rgba(234,88,12,0.1)" stroke="#ea580c" stroke-width="1"/>
<circle cx="676.66" cy="1045.26" r="4" fill="rgba(234,88,12,0.1)" stroke="#ea580c" stroke-width="1"/>
<circle cx="709.59" cy="1055.56" r="4" fill="rgba(234,88,12,0.1)" stroke="#ea580c" stroke-width="1"/>
<circle cx="742.51" cy="1055.56" r="4" fill="rgba(234,88,12,0.1)" stroke="#ea580c" stroke-width="1"/>
<circle cx="775.44" cy="1065.87" r="4" fill="rgba(234,88,12,0.1)" stroke="#ea580c" stroke-width="1"/>
<circle cx="808.37" cy="1069.30" r="4" fill="rgba(234,88,12,0.1)" stroke="#ea580c" stroke-width="1"/>
<circle cx="841.29" cy="1076.17" r="4" fill="rgba(234,88,12,0.1)" stroke="#ea580c" stroke-width="1"/>
<circle cx="874.22" cy="1086.47" r="4" fill="rgba(234,88,12,0.1)" stroke="#ea580c" stroke-width="1"/>
<circle cx="907.14" cy="1096.78" r="4" fill="rgba(234,88,12,0.1)" stroke="#ea580c" stroke-width="1"/>
<circle cx="940.07" cy="1100.21" r="4" fill="rgba(234,88,12,0.1)" stroke="#ea580c" stroke-width="1"/>
<circle cx="973.00" cy="1103.65" r="4" fill="rgba(234,88,12,0.1)" stroke="#ea580c" stroke-width="1"/>
<circle cx="1005.92" cy="1113.95" r="4" fill="rgba(234,88,12,0.1)" stroke="#ea580c" stroke-width="1"/>
<circle cx="1038.85" cy="1120.83" r="4" fill="rgba(234,88,12,0.1)" stroke="#ea580c" stroke-width="1"/>
<circle cx="1071.77" cy="1124.26" r="4" fill="rgba(234,88,12,0.1)" stroke="#ea580c" stroke-width="1"/>
<circle cx="1104.70" cy="1131.13" r="4" fill="rgba(234,88,12,0.1)" stroke="#ea580c" stroke-width="1"/>
<path d="M347.40 1096.78 C360.57 1096.78 367.16 1096.78 380.33 1096.78 C393.50 1096.78 400.22 1095.42 413.25 1096.78 C426.56 1098.17 432.90 1101.57 446.18 1103.65 C459.24 1105.69 465.90 1106.40 479.10 1107.09 C492.24 1107.77 498.90 1107.77 512.03 1107.09 C525.24 1106.40 531.89 1102.97 544.96 1103.65 C558.23 1104.34 564.61 1109.83 577.88 1110.52 C590.95 1111.20 597.74 1106.40 610.81 1107.09 C624.08 1107.78 630.42 1112.57 643.73 1113.95 C656.76 1115.31 663.53 1113.27 676.66 1113.95 C689.87 1114.64 696.38 1116.70 709.59 1117.39 C722.72 1118.08 729.38 1116.70 742.51 1117.39 C755.72 1118.08 762.23 1120.14 775.44 1120.83 C788.57 1121.51 795.19 1120.83 808.37 1120.83 C821.54 1120.83 828.16 1120.14 841.29 1120.83 C854.50 1121.51 861.01 1123.57 874.22 1124.26 C887.35 1124.95 894.01 1123.57 907.14 1124.26 C920.35 1124.95 926.86 1127.01 940.07 1127.69 C953.20 1128.38 959.86 1127.01 973.00 1127.69 C986.20 1128.38 992.72 1130.44 1005.92 1131.13 C1019.06 1131.82 1025.71 1130.44 1038.85 1131.13 C1052.05 1131.82 1058.60 1133.19 1071.77 1134.57 C1084.94 1135.94 1091.53 1136.63 1104.70 1138.00" fill="none" stroke="#dc2626" stroke-width="3"/>
<circle cx="347.40" cy="1096.78" r="4" fill="rgba(220,38,38,0.1)" stroke="#dc2626" stroke-width="1"/>
<circle cx="380.33" cy="1096.78" r="4" fill="rgba(220,38,38,0.1)" stroke="#dc2626" stroke-width="1"/>
<circle cx="413.25" cy="1096.78" r="4" fill="rgba(220,38,38,0.1)" stroke="#dc2626" stroke-width="1"/>
<circle cx="446.18" cy="1103.65" r="4" fill="rgba(220,38,38,0.1)" stroke="#dc2626" stroke-width="1"/>
<circle cx="479.10" cy="1107.09" r="4" fill="rgba(220,38,38,0.1)" stroke="#dc2626" stroke-width="1"/>
<circle cx="512.03" cy="1107.09" r="4" fill="rgba(220,38,38,0.1)" stroke="#dc2626" stroke-width="1"/>
<circle cx="544.96" cy="1103.65" r="4" fill="rgba(220,38,38,0.1)" stroke="#dc2626" stroke-width="1"/>
<circle cx="577.88" cy="1110.52" r="4" fill="rgba(220,38,38,0.1)" stroke="#dc2626" stroke-width="1"/>
<circle cx="610.81" cy="1107.09" r="4" fill="rgba(220,38,38,0.1)" stroke="#dc2626" stroke-width="1"/>
<circle cx="643.73" cy="1113.95" r="4" fill="rgba(220,38,38,0.1)" stroke="#dc2626" stroke-width="1"/>
<circle cx="676.66" cy="1113.95" r="4" fill="rgba(220,38,38,0.1)" stroke="#dc2626" stroke-width="1"/>
<circle cx="709.59" cy="1117.39" r="4" fill="rgba(220,38,38,0.1)" stroke="#dc2626" stroke-width="1"/>
<circle cx="742.51" cy="1117.39" r="4" fill="rgba(220,38,38,0.1)" stroke="#dc2626" stroke-width="1"/>
<circle cx="775.44" cy="1120.83" r="4" fill="rgba(220,38,38,0.1)" stroke="#dc2626" stroke-width="1"/>
<circle cx="808.37" cy="1120.83" r="4" fill="rgba(220,38,38,0.1)" stroke="#dc2626" stroke-width="1"/>
<circle cx="841.29" cy="1120.83" r="4" fill="rgba(220,38,38,0.1)" stroke="#dc2626" stroke-width="1"/>
<circle cx="874.22" cy="1124.26" r="4" fill="rgba(220,38,38,0.1)" stroke="#dc2626" stroke-width="1"/>
<circle cx="907.14" cy="1124.26" r="4" fill="rgba(220,38,38,0.1)" stroke="#dc2626" stroke-width="1"/>
<circle cx="940.07" cy="1127.69" r="4" fill="rgba(220,38,38,0.1)" stroke="#dc2626" stroke-width="1"/>
<circle cx="973.00" cy="1127.69" r="4" fill="rgba(220,38,38,0.1)" stroke="#dc2626" stroke-width="1"/>
<circle cx="1005.92" cy="1131.13" r="4" fill="rgba(220,38,38,0.1)" stroke="#dc2626" stroke-width="1"/>
<circle cx="1038.85" cy="1131.13" r="4" fill="rgba(220,38,38,0.1)" stroke="#dc2626" stroke-width="1"/>
<circle cx="1071.77" cy="1134.57" r="4" fill="rgba(220,38,38,0.1)" stroke="#dc2626" stroke-width="1"/>
<circle cx="1104.70" cy="1138.00" r="4" fill="rgba(220,38,38,0.1)" stroke="#dc2626" stroke-width="1"/>
<text x="336" y="1138.0" font-size="12" fill="#666" text-anchor="end" dominant-baseline="central">0</text>
<text x="336" y="1103.7" font-size="12" fill="#666" text-anchor="end" dominant-baseline="central">10</text>
<text x="336" y="1069.3" font-size="12" fill="#666" text-anchor="end" dominant-baseline="central">20</text>
<text x="336" y="1035.0" font-size="12" fill="#666" text-anchor="end" dominant-baseline="central">30</text>
<text x="336" y="1000.6" font-size="12" fill="#666" text-anchor="end" dominant-baseline="central">40</text>
<text transform="translate(313 1061) rotate(-90)" font-size="12" fill="#666" text-anchor="middle">Alert Count</text>
<text transform="translate(345.60 1156.4) rotate(-40)" font-size="12" fill="#666" text-anchor="end" dominant-baseline="central">07:30 PM</text>
<text transform="translate(378.53 1156.4) rotate(-40)" font-size="12" fill="#666" text-anchor="end" dominant-baseline="central">08:30 PM</text>
<text transform="translate(411.45 1156.4) rotate(-40)" font-size="12" fill="#666" text-anchor="end" dominant-baseline="central">09:30 PM</text>
<text transform="translate(444.38 1156.4) rotate(-40)" font-size="12" fill="#666" text-anchor="end" dominant-baseline="central">10:30 PM</text>
<text transform="translate(477.30 1156.4) rotate(-40)" font-size="12" fill="#666" text-anchor="end" dominant-baseline="central">11:30 PM</text>
<text transform="translate(510.23 1156.4) rotate(-40)" font-size="12" fill="#666" text-anchor="end" dominant-baseline="central">12:30 AM</text>
<text transform="translate(543.16 1156.4) rotate(-40)" font-size="12" fill="#666" text-anchor="end" dominant-baseline="central">01:30 AM</text>
<text transform="translate(576.08 1156.4) rotate(-40)" font-size="12" fill="#666" text-anchor="end" dominant-baseline="central">02:30 AM</text>
<text transform="translate(609.01 1156.4) rotate(-40)" font-size="12" fill="#666" text-anchor="end" dominant-baseline="central">03:30 AM</text>
<text transform="translate(641.93 1156.4) rotate(-40)" font-size="12" fill="#666" text-anchor="end" dominant-baseline="central">04:30 AM</text>
<text transform="translate(674.86 1156.4) rotate(-40)" font-size="12" fill="#666" text-anchor="end" dominant-baseline="central">05:30 AM</text>
<text transform="translate(707.79 1156.4) rotate(-40)" font-size="12" fill="#666" text-anchor="end" dominant-baseline="central">06:30 AM</text>
<text transform="translate(740.71 1156.4) rotate(-40)" font-size="12" fill="#666" text-anchor="end" dominant-baseline="central">07:30 AM</text>
<text transform="translate(773.64 1156.4) rotate(-40)" font-size="12" fill="#666" text-anchor="end" dominant-baseline="central">08:30 AM</text>
<text transform="translate(806.57 1156.4) rotate(-40)" font-size="12" fill="#666" text-anchor="end" dominant-baseline="central">09:30 AM</text>
<text transform="translate(839.49 1156.4) rotate(-40)" font-size="12" fill="#666" text-anchor="end" dominant-baseline="central">10:30 AM</text>
<text transform="translate(872.42 1156.4) rotate(-40)" font-size="12" fill="#666" text-anchor="end" dominant-baseline="central">11:30 AM</text>
<text transform="translate(905.34 1156.4) rotate(-40)" font-size="12" fill="#666" text-anchor="end" dominant-baseline="central">12:30 PM</text>
<text transform="translate(938.27 1156.4) rotate(-40)" font-size="12" fill="#666" text-anchor="end" dominant-baseline="central">01:30 PM</text>
<text transform="translate(971.20 1156.4) rotate(-40)" font-size="12" fill="#666" text-anchor="end" dominant-baseline="central">02:30 PM</text>
<text transform="translate(1004.12 1156.4) rotate(-40)" font-size="12" fill="#666" text-anchor="end" dominant-baseline="central">03:30 PM</text>
<text transform="translate(1037.05 1156.4) rotate(-40)" font-size="12" fill="#666" text-anchor="end" dominant-baseline="central">04:30 PM</text>
<text transform="translate(1069.97 1156.4) rotate(-40)" font-size="12" fill="#666" text-anchor="end" dominant-baseline="central">05:30 PM</text>
<text transform="translate(1102.90 1156.4) rotate(-40)" font-size="12" fill="#666" text-anchor="end" dominant-baseline="central">06:30 PM</text>
<text x="726" y="1210" font-size="12" fill="#666" text-anchor="middle">Time</text>
<rect x="536.7" y="962.5" width="39" height="11" fill="rgba(220,38,38,0.1)" stroke="#dc2626" stroke-width="3"/>
<text x="582.4" y="972" font-size="12" fill="#666">Critical</text>
<rect x="630.3" y="962.5" width="39" height="11" fill="rgba(234,88,12,0.1)" stroke="#ea580c" stroke-width="3"/>
<text x="675.7" y="972" font-size="12" fill="#666">High</text>
<rect x="711.1" y="962.5" width="39" height="11" fill="rgba(202,138,4,0.1)" stroke="#ca8a04" stroke-width="3"/>
<text x="756.5" y="972" font-size="12" fill="#666">Medium</text>
<rect x="810.7" y="962.5" width="39" height="11" fill="rgba(100,116,139,0.1)" stroke="#64748b" stroke-width="3"/>
<text x="856.1" y="972" font-size="12" fill="#666">Low</text>
</svg>
<div id="tcard"></div>
<div class="abs" style="left:1209px;top:861px;font-size:16px;font-weight:bold;color:#1e293b;line-height:20px;letter-spacing:-0.45px">Top Threat Types</div>
<div class="abs" style="left:1426px;width:100px;text-align:right;top:863px;font-size:13px;color:#64748b;line-height:16px;letter-spacing:-0.2px">Last 7 days</div>
<div class="abs" style="left:1209px;top:892px;width:317px;height:1px;background:#b8c8e0"></div>
<div class="titem" style="top:909px"><span class="bd">1</span><span class="t">Compiled Policy</span><span class="pill" style="width:30px;left:270px">13</span></div>
<div class="titem" style="top:963px"><span class="bd">2</span><span class="t">Skill Security</span><span class="pill" style="width:23px;left:277px">7</span></div>
<div class="abs" style="left:1611px;top:57px;width:1px;height:1179px;background:#dedede"></div>
<div id="toggle"><svg width="18" height="18" viewBox="0 0 24 24" fill="none" stroke="#ffffff" stroke-width="2" stroke-linecap="round" stroke-linejoin="round"><path d="m9 18 6-6-6-6"/></svg></div>
</body></html>
